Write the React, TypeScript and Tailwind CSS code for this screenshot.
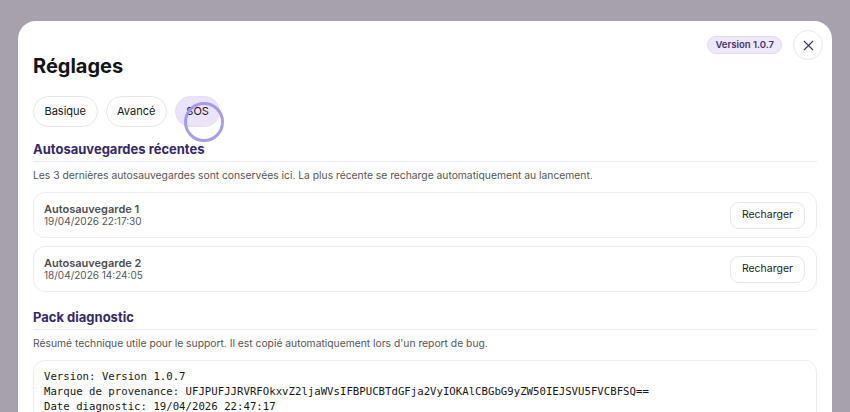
import { X } from 'lucide-react'

const autosaves = [
  { id: 1, label: 'Autosauvegarde 1', date: '19/04/2026 22:17:30' },
  { id: 2, label: 'Autosauvegarde 2', date: '18/04/2026 14:24:05' },
]

const diagLines = [
  'Version: Version 1.0.7',
  'Marque de provenance: UFJPUFJJRVRFOkxvZ2ljaWVsIFBPUCBTdGFja2VyIOKAlCBGbG9yZW50IEJSVU5FVCBFSQ==',
  'Date diagnostic: 19/04/2026 22:47:17',
]

const tabs = ['Basique', 'Avancé', 'SOS']

function SectionTitle({ children }: { children: string }) {
  return (
    <div className="border-b border-[#ebe7f4] pb-[3px]">
      <h2 className="text-[13px] font-bold leading-[18px] text-[#35286a]">{children}</h2>
    </div>
  )
}

export default function App() {
  return (
    <div
      className="h-[412px] w-[850px] overflow-hidden bg-[#a6a1ac] pt-[21px] pl-[18px] pr-[18px]"
      style={{ fontFamily: 'Inter, "Noto Sans", sans-serif' }}
    >
      <div className="h-[420px] rounded-t-[18px] bg-white px-[15px] pt-[9px]">
        {/* Header */}
        <div className="-mr-[6px] flex items-center justify-end gap-[11px]">
          <span className="rounded-full border border-[#e3d9f6] bg-[#efe8fb] px-[7px] text-[9.5px] font-semibold leading-[16px] text-[#3f3470]">
            Version 1.0.7
          </span>
          <button className="flex h-[30px] w-[30px] items-center justify-center rounded-full border border-[#ebe8f0] bg-white text-[#3a2f66]">
            <X className="h-[17px] w-[17px]" strokeWidth={1.5} />
          </button>
        </div>
        <h1 className="-mt-[8px] text-[20px] font-bold leading-[28px] text-[#141414]">Réglages</h1>

        {/* Tabs */}
        <div className="mt-[16px] flex gap-[8px]">
          {tabs.map((t) => (
            <div key={t} className="relative">
              <button
                className={
                  t === 'SOS'
                    ? 'h-[31px] rounded-full border border-[#e6dcf8] bg-[#ebe2fb] px-[10.5px] text-[11px] text-[#151515]'
                    : 'h-[31px] rounded-full border border-[#e6e6e8] bg-white px-[10.5px] text-[11px] text-[#151515]'
                }
              >
                {t}
              </button>
              {t === 'SOS' && (
                <span className="pointer-events-none absolute left-[9px] top-[6px] h-[40px] w-[40px] rounded-full border-[3px] border-[#9b92ec]/90" />
              )}
            </div>
          ))}
        </div>

        {/* Autosaves */}
        <div className="mt-[13px]">
          <SectionTitle>Autosauvegardes récentes</SectionTitle>
          <p className="mt-[7px] text-[10.3px] leading-[13px] text-[#555555]">
            Les 3 dernières autosauvegardes sont conservées ici. La plus récente se recharge automatiquement au lancement.
          </p>
          <div className="mt-[10px] flex flex-col gap-[8px]">
            {autosaves.map((a) => (
              <div
                key={a.id}
                className="flex h-[46px] items-center justify-between rounded-[12px] border border-[#ececef] pl-[10px] pr-[11px]"
              >
                <div className="text-[10px] leading-[12px] text-[#555555]">
                  <div className="text-[11px] font-semibold text-[#4d4d4d]">{a.label}</div>
                  <div>{a.date}</div>
                </div>
                <button className="h-[27px] rounded-[9px] border border-[#e6e6e8] bg-white px-[11px] text-[10.5px] text-[#222222]">
                  Recharger
                </button>
              </div>
            ))}
          </div>
        </div>

        {/* Diagnostic */}
        <div className="mt-[16px]">
          <SectionTitle>Pack diagnostic</SectionTitle>
          <p className="mt-[7px] text-[10.3px] leading-[13px] text-[#555555]">
            Résumé technique utile pour le support. Il est copié automatiquement lors d'un report de bug.
          </p>
          <div className="mt-[10px] rounded-[12px] border border-[#ececef] px-[10px] pt-[8px] pb-[12px]">
            <pre
              className="text-[10.7px] leading-[15px] text-[#161616]"
              style={{ fontFamily: '"DejaVu Sans Mono", "Liberation Mono", monospace' }}
            >
              {diagLines.join('\n')}
            </pre>
          </div>
        </div>
      </div>
    </div>
  )
}
